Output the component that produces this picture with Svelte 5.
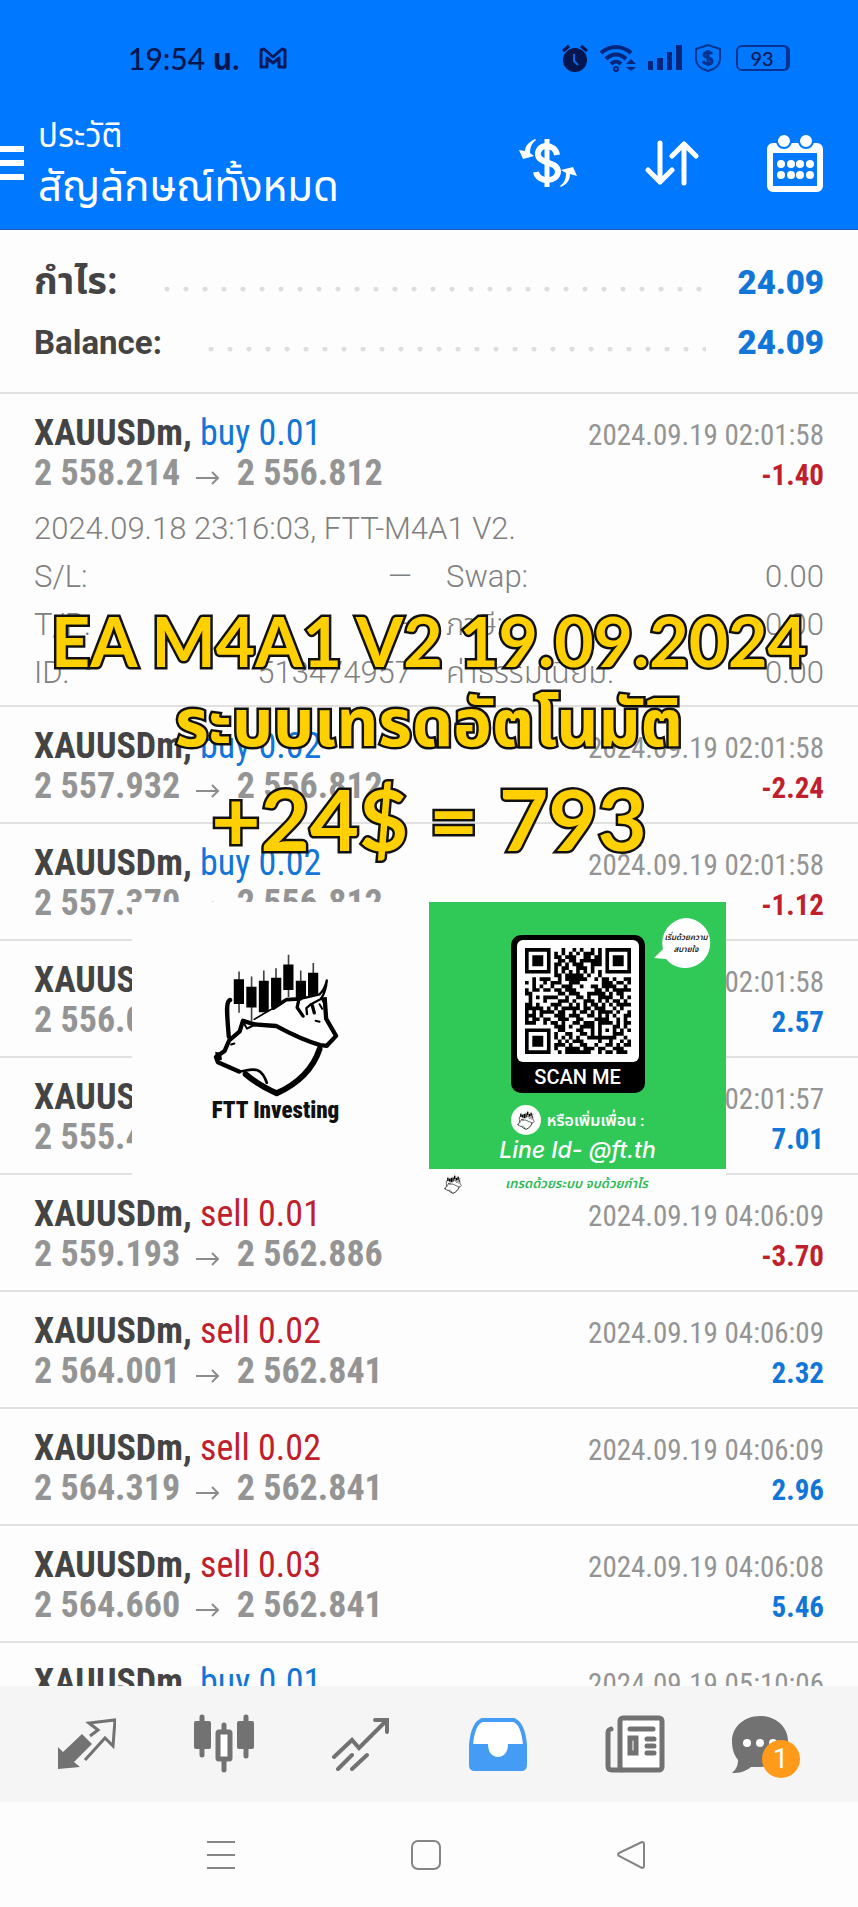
<script>
    const deals = [
        { side: 'buy', volume: '0.02', open: '2 557.932', close: '2 556.812', time: '2024.09.19 02:01:58', profit: '-2.24' },
        { side: 'buy', volume: '0.02', open: '2 557.370', close: '2 556.812', time: '2024.09.19 02:01:58', profit: '-1.12' },
        { side: 'buy', volume: '0.03', open: '2 556.014', close: '2 556.871', time: '2024.09.19 02:01:58', profit: '2.57' },
        { side: 'buy', volume: '0.05', open: '2 555.410', close: '2 556.812', time: '2024.09.19 02:01:57', profit: '7.01' },
        { side: 'sell', volume: '0.01', open: '2 559.193', close: '2 562.886', time: '2024.09.19 04:06:09', profit: '-3.70' },
        { side: 'sell', volume: '0.02', open: '2 564.001', close: '2 562.841', time: '2024.09.19 04:06:09', profit: '2.32' },
        { side: 'sell', volume: '0.02', open: '2 564.319', close: '2 562.841', time: '2024.09.19 04:06:09', profit: '2.96' },
        { side: 'sell', volume: '0.03', open: '2 564.660', close: '2 562.841', time: '2024.09.19 04:06:08', profit: '5.46' },
        { side: 'buy', volume: '0.01', open: '2 559.020', close: '2 561.114', time: '2024.09.19 05:10:06', profit: '2.09' },
    ]

    const first = {
        side: 'buy', volume: '0.01', open: '2 558.214', close: '2 556.812', time: '2024.09.19 02:01:58', profit: '-1.40',
        details: [
            ['S/L:', '—', 'Swap:', '0.00'],
            ['T/P:', '—', 'ภาษี:', '0.00'],
            ['ID:', '513474957', 'ค่าธรรมเนียม:', '0.00'],
        ]
    }

    const qr = [
        '11111110001001010010101111111',
        '10000010101010101110101000001',
        '10111010110111001101101011101',
        '10111010011011011111101011101',
        '10111010110101110011101011101',
        '10000010101100111010001000001',
        '11111110101010101010101111111',
        '00000000110111110100100000000',
        '00101110010111111001011010011',
        '10100101110011100000011101101',
        '00101001001110010011011110010',
        '10110110110111000001101011111',
        '11000000011011100111110101100',
        '01010111100100110100111100101',
        '01000100011101001110101011010',
        '11010001110010101011010101111',
        '11111010101111101101110010100',
        '10101111011001011010111101001',
        '11101000111011100110101010011',
        '10110110011100110001111001010',
        '11100101101001101110111101011',
        '00000000111010011110100011010',
        '11111110011000110010101010101',
        '10000010100110011010100011100',
        '10111010101010100111111110010',
        '10111010010101110000100100101',
        '10111010111010011001001101011',
        '10000010100111101110110011100',
        '11111110010111111100101101110',
    ]

    let qr_path = ''
    qr.forEach((row, y) => {
        for (let x = 0; x < row.length; x++) {
            if (row[x] == '1') qr_path += `M${x} ${y}h1v1h-1z`
        }
    })
</script>

{#snippet logo()}
    <svg class="logo" viewBox="270 185 400 440" aria-hidden="true">
        <g stroke="#444" stroke-width="5">
            <path d="M358 243v125M396 258v135M433 240v120M470 233v100M508 192v128M545 240v80M583 217v80" />
        </g>
        <path d="M342 266h31v75h-31zM380 289h31v63h-31zM418 271h30v95h-30zM455 262h31v90h-31zM492 222h31v77h-31zM530 271h31v55h-31zM567 247h31v70h-31z" />
        <g fill="none" stroke="#000" stroke-linejoin="round" stroke-linecap="round">
            <path fill="#fff" stroke="none" d="M404 392l60-38 42-28 38-2 56-14 24-40-8 56 8 62 34 52-30 32-30-2-130-46z" />
            <path stroke-width="13" d="M331 329c-14 4-10 40-4 112" />
            <path stroke-width="5" d="M404 388l40-24 22-12" />
            <path stroke-width="11" d="M462 354l40-26 42-2" />
            <path stroke-width="7" d="M544 326l58-14c12-12 18-24 22-42-2 24-8 42-18 56l-30 16-14 12 2 18" />
            <path stroke-width="13" d="M618 330l4 56 30 52-28 30-20-2c-50-14-90-34-134-58l-66-5" />
            <path stroke-width="10" d="M538 334l-4 18 18 26M580 346l6 22" />
            <path stroke-width="13" d="M404 403l-34-11-10 32-32 28-14 32-26 18 6 16 64 28" />
            <path stroke-width="8" d="M358 546c22-2 36-10 56-4 12 5 22 20 28 38" />
            <path stroke-width="18" d="M378 554c28 24 58 42 94 58 66-30 110-74 130-134" />
            <path stroke-width="6" d="M372 398l10 18 16-8M590 392l12 3M602 342l8 14M334 464l10-3" />
        </g>
        <path d="M286 486l18 4 2 20-18 6zM604 322l20-2v40l-12-22z" />
    </svg>
{/snippet}

{#snippet deal_head(deal)}
    <div class="line">
        <span class="symbol">XAUUSDm, <span class={deal.side}>{deal.side} {deal.volume}</span></span>
        <time>{deal.time}</time>
    </div>
    <div class="line">
        <span class="price">
            {deal.open}
            <svg class="arrow" viewBox="0 0 24 14" aria-hidden="true"><path d="M0 7h22M16 1l6 6-6 6" /></svg>
            {deal.close}
        </span>
        <span class="profit" class:loss={deal.profit[0] == '-'}>{deal.profit}</span>
    </div>
{/snippet}

<div class="app">
    <header>
        <div class="status">
            <span class="clock">19:54 <b>น.</b></span>
            <svg width="28" height="22" viewBox="0 0 28 22" aria-hidden="true">
                <path d="M2 20V3l3-1 9 8 9-8 3 1v17h-6V11l-6 5-6-5v9z" fill="none" stroke="#061a5c" stroke-width="3" stroke-linejoin="round" />
            </svg>
            <svg class="alarm" width="26" height="28" viewBox="0 0 26 28" aria-hidden="true">
                <circle cx="13" cy="16" r="12" fill="#04164f" />
                <path d="M1 7l6-5M25 7l-6-5" stroke="#04164f" stroke-width="3" />
                <path d="M12 10v7l4 4" stroke="#0a6be0" stroke-width="2" fill="none" />
            </svg>
            <svg width="36" height="28" viewBox="0 0 36 28" fill="none" stroke="#04257c" stroke-width="4" aria-hidden="true">
                <path d="M1 9c9-8 21-8 30 0M6 15c6-6 14-6 20 0M11 20c3-3 7-3 10 0" />
                <circle cx="16" cy="25" r="1" />
                <path d="M26 20l5-5 5 5zM26 23l5 4 5-4z" fill="#04257c" stroke="none" />
            </svg>
            <svg width="34" height="26" viewBox="0 0 34 26" fill="#04257c" aria-hidden="true">
                <path d="M0 16h5v9H0zM9 13h6v12H9zM19 7h5v18h-5zM28 0h6v25h-6z" />
            </svg>
            <svg class="shield" width="28" height="30" viewBox="0 0 28 30" fill="none" stroke="#043490" stroke-width="2" aria-hidden="true">
                <path d="M14 2l12 4v10c0 6-5 10-12 12C7 26 2 22 2 16V6z" />
                <path stroke-width="3" d="M18 11c-2-3-8-2-8 1s8 2 8 6-7 4-9 0M14 7v16" />
            </svg>
            <span class="battery">93</span>
        </div>
        <div class="toolbar">
            <button class="menu" aria-label="Menu"><span></span><span></span><span></span></button>
            <div class="heading">
                <div class="section">ประวัติ</div>
                <h1>สัญลักษณ์ทั้งหมด</h1>
            </div>
            <button aria-label="Currency">
                <svg width="58" height="50" viewBox="0 0 58 50" fill="none" stroke="#fff" aria-hidden="true">
                    <path stroke-width="6" d="M38 17c-2-12-20-12-19 0 1 9 19 6 20 16 0 12-20 12-22 1" />
                    <path stroke-width="5" d="M28 1v48" />
                    <path fill="#fff" stroke="none" d="M16 1C10 4 6 8 6 13L0 12l4 9 11-3-4-3C11 9 13 5 17 2zM42 49c6-3 9-7 9-13l7 2-4-9-12 3 5 3c0 6-2 10-6 13z" />
                </svg>
            </button>
            <button aria-label="Sort">
                <svg width="54" height="46" viewBox="0 0 54 46" fill="none" stroke="#fff" stroke-width="5" stroke-linecap="round" stroke-linejoin="round" aria-hidden="true">
                    <path d="M15 3v39M3 30l12 12 12-12M39 43V4M27 16L39 4l12 12" />
                </svg>
            </button>
            <button aria-label="Period">
                <svg width="56" height="58" viewBox="0 0 56 58" aria-hidden="true">
                    <rect x="3" y="12" width="50" height="43" rx="3" fill="none" stroke="#fff" stroke-width="6" />
                    <path d="M3 10h50v9H3z" fill="#fff" />
                    <circle cx="17" cy="7" r="7" fill="#fff" stroke="#0078ff" stroke-width="2" />
                    <circle cx="39" cy="7" r="7" fill="#fff" stroke="#0078ff" stroke-width="2" />
                    {#each [14, 24, 33, 43] as cx}
                        <circle {cx} cy="30" r="4" fill="#fff" />
                        <circle {cx} cy="41" r="4" fill="#fff" />
                    {/each}
                </svg>
            </button>
        </div>
    </header>

    <main>
        <section class="summary">
            <div class="total"><span class="thai-label">กำไร:</span><i class="dots"></i><b>24.09</b></div>
            <div class="total"><span>Balance:</span><i class="dots"></i><b>24.09</b></div>
        </section>

        <article class="deal">
            {@render deal_head(first)}
            <div class="details">
                <p>2024.09.18 23:16:03, FTT-M4A1 V2.</p>
                {#each first.details as [l1, v1, l2, v2]}
                    <div class="pair"><span>{l1}</span><span>{v1}</span></div>
                    <div class="pair"><span>{l2}</span><span>{v2}</span></div>
                {/each}
            </div>
        </article>

        {#each deals as deal}
            <article class="deal">
                {@render deal_head(deal)}
            </article>
        {/each}
    </main>

    <nav class="tabs">
        <a href="#quotes" aria-label="Quotes">
            <svg width="58" height="52" viewBox="0 0 58 52" aria-hidden="true">
                <path d="M0 51V29l5 5 19-18 10 10-18 18 6 5z" fill="#727272" />
                <path d="M32 18l8-6-9-7 26-3-2 26-8-8-20 22" fill="none" stroke="#727272" stroke-width="3" />
            </svg>
        </a>
        <a href="#charts" aria-label="Charts">
            <svg width="60" height="60" viewBox="0 0 60 60" fill="#727272" aria-hidden="true">
                <rect x="0" y="7" width="17" height="28" rx="2" />
                <rect x="43" y="7" width="17" height="28" rx="2" />
                <rect x="24" y="18" width="12" height="27" rx="1" fill="#fff" stroke="#727272" stroke-width="5" />
                <path d="M8 3v38M52 3v39M30 11v6M30 46v10" stroke="#727272" stroke-width="5" stroke-linecap="round" />
            </svg>
        </a>
        <a href="#trade" aria-label="Trade">
            <svg width="58" height="54" viewBox="0 0 58 54" fill="none" stroke="#727272" stroke-width="4" stroke-linecap="round" aria-hidden="true">
                <path d="M2 40l18-17 7 8L54 4M43 3h12v12M6 52l14-14M20 52l15-14" />
            </svg>
        </a>
        <a href="#history" aria-label="History" aria-current="page">
            <svg width="58" height="54" viewBox="0 0 58 54" aria-hidden="true">
                <path d="M13 3h32c7 3 10 13 11 25v20c0 3-1 4-4 4H6c-3 0-4-1-4-4V28C3 16 6 6 13 3z" fill="#fff" stroke="#459cf5" stroke-width="4" />
                <path d="M1 27h18c0 8 4 13 10 13s10-5 10-13h18v21c0 4-1 5-5 5H6c-4 0-5-1-5-5z" fill="#459cf5" />
            </svg>
        </a>
        <a href="#news" aria-label="News">
            <svg width="60" height="58" viewBox="0 0 60 58" fill="none" stroke="#727272" stroke-width="5" stroke-linecap="round" aria-hidden="true">
                <rect x="15" y="3" width="42" height="52" rx="3" fill="#fff" />
                <path d="M6 14c-3 1-3 2-3 5v32c0 3 1 4 4 4h10M25 14h23M42 24h7M42 31h7M42 38h7M25 23h6v15h-6z" />
            </svg>
        </a>
        <a href="#messages" aria-label="Messages" class="messages">
            <svg width="58" height="58" viewBox="0 0 58 58" fill="#727272" aria-hidden="true">
                <path d="M29 1c16 0 28 11 28 25S46 52 30 52l-10 0C14 57 8 58 1 58c4-4 6-7 6-13C3 40 1 34 1 26 1 12 13 1 29 1z" />
                <g fill="#fff"><circle cx="16" cy="28" r="4" /><circle cx="29" cy="28" r="4" /><circle cx="42" cy="28" r="4" /></g>
            </svg>
            <span class="badge">1</span>
        </a>
    </nav>

    <div class="system">
        <button aria-label="Recent apps">
            <svg width="30" height="30" viewBox="0 0 30 30" aria-hidden="true"><path d="M1 2h28M1 15h28M1 28h28" /></svg>
        </button>
        <button aria-label="Home">
            <svg width="30" height="30" viewBox="0 0 30 30" aria-hidden="true"><rect x="1" y="1" width="28" height="28" rx="6" /></svg>
        </button>
        <button aria-label="Back">
            <svg width="30" height="30" viewBox="0 0 30 30" aria-hidden="true"><path d="M26 2L3 13q-2 1 0 3l23 12q2 0 2-2V4q0-2-2-2z" /></svg>
        </button>
    </div>

    <div class="promo">
        <p class="name">EA M4A1 V2 19.09.2024</p>
        <p class="thai">ระบบเทรดอัตโนมัติ</p>
        <p class="gain">+24$ = 793</p>
        <div class="cards">
            <div class="brand">
                {@render logo()}
                <span>FTT Investing</span>
            </div>
            <div class="line-card">
                <div class="green">
                    <div class="scan">
                        <svg class="qr" viewBox="0 0 29 29" role="img" aria-label="QR"><path d={qr_path} /></svg>
                        <span>SCAN ME</span>
                    </div>
                    <div class="bubble">
                        <svg width="58" height="52" viewBox="0 0 58 52" aria-hidden="true"><path fill="#fff" d="M32 0a25 25 0 1 1-20 41L0 40l9-9A25 25 0 0 1 32 0z" /></svg>
                        <span>เริ่มด้วยความ<br>สบายใจ</span>
                    </div>
                    <div class="friend"><i>{@render logo()}</i>หรือเพิ่มเพื่อน :</div>
                    <div class="line-id">Line Id- @ft.th</div>
                </div>
                <div class="motto">
                    {@render logo()}
                    <span>เทรดด้วยระบบ จบด้วยกำไร</span>
                </div>
            </div>
        </div>
    </div>
</div>

<style>
    :global(body) {
        margin: 0;
    }

    .app {
        position: relative;
        height: 100vh;
        display: flex;
        flex-direction: column;
        overflow: hidden;
        background: #fdfdfd;
        font-family: Roboto, "Noto Sans Thai", "Noto Sans", sans-serif;
        color: #444;
    }

    p, h1 {
        margin: 0;
        font-weight: 400;
    }

    svg {
        display: block;
        flex: none;
    }

    button {
        padding: 0;
        border: 0;
        background: none;
        cursor: pointer;
    }

    header {
        flex: none;
        height: 230px;
        box-sizing: border-box;
        padding-top: 40px;
        background: #0078ff;
        border-bottom: 1px solid #1f5bb5;
    }

    .status {
        display: flex;
        align-items: center;
        height: 36px;
        padding: 0 68px 0 128px;
        color: #04164f;
    }

    .clock {
        margin-right: 20px;
        font: 500 30px/36px Lato, "Noto Sans Thai", sans-serif;
    }

    .alarm {
        margin-left: auto;
    }

    .status svg + svg {
        margin-right: 12px;
    }

    .battery {
        width: 48px;
        height: 22px;
        margin-left: 2px;
        border: 2px solid #043490;
        border-right-width: 4px;
        border-radius: 6px;
        font: 500 20px/22px Lato, sans-serif;
        text-align: center;
    }

    .toolbar {
        display: flex;
        align-items: center;
        gap: 68px;
        height: 124px;
        margin-top: 25px;
        padding-right: 35px;
        color: #fff;
    }

    .menu {
        display: grid;
        gap: 8px;
        width: 24px;
        margin-right: -54px;
    }

    .menu span {
        height: 6px;
        background: #fff;
    }

    .heading {
        flex: 1;
    }

    .section {
        font-size: 33px;
        line-height: 48px;
    }

    h1 {
        font-size: 42px;
        line-height: 54px;
        white-space: nowrap;
    }

    main {
        flex: 1;
        min-height: 0;
        overflow: hidden;
    }

    .summary {
        padding: 22px 34px 20px;
        border-bottom: 2px solid #e0e0e0;
    }

    .total {
        display: flex;
        align-items: center;
        height: 60px;
        font-size: 33px;
        font-weight: 700;
    }

    .total .thai-label {
        font-size: 38px;
    }

    .dots {
        flex: 1;
        height: 5px;
        margin: 14px 32px 0 46px;
        background: radial-gradient(circle at 3px 2px, #ddd 2px, transparent 3px) 0 0 / 19px 5px repeat-x;
    }

    .total b {
        color: #1275d8;
    }

    .deal {
        padding: 19px 34px 16px;
        border-bottom: 2px solid #e0e0e0;
        font-family: "Roboto Condensed", "Liberation Sans Narrow", Roboto, sans-serif;
    }

    .line {
        display: flex;
        align-items: baseline;
        justify-content: space-between;
        height: 40px;
        line-height: 40px;
        white-space: nowrap;
    }

    .symbol, .price {
        font-size: 36px;
        font-weight: 700;
    }

    .symbol span {
        font-weight: 400;
    }

    .buy {
        color: #1275d8;
    }

    .sell {
        color: #c0202c;
    }

    .price {
        color: #949494;
    }

    .arrow {
        display: inline-block;
        width: 24px;
        height: 14px;
        margin: 0 8px;
        fill: none;
        stroke: #8c8c8c;
        stroke-width: 2;
    }

    time {
        font-size: 29px;
        color: #949494;
    }

    .profit {
        font-size: 29px;
        font-weight: 700;
        color: #1275d8;
    }

    .profit.loss {
        color: #c0202c;
    }

    .details {
        display: grid;
        grid-template-columns: 1fr 1fr;
        column-gap: 34px;
        padding-top: 12px;
        margin-bottom: -8px;
        font: 300 31px/48px Roboto, "Noto Sans Thai", sans-serif;
        color: #808080;
    }

    .details p {
        grid-column: 1 / 3;
        font-weight: 300;
    }

    .pair {
        display: flex;
        justify-content: space-between;
    }

    .tabs {
        flex: none;
        display: grid;
        grid-template-columns: repeat(6, 1fr);
        height: 116px;
        padding: 0 18px;
        background: #f5f5f5;
    }

    .tabs a {
        display: flex;
        align-items: center;
        justify-content: center;
    }

    .tabs .messages {
        position: relative;
        padding-right: 24px;
    }

    .badge {
        position: absolute;
        left: calc(50% - 10px);
        top: 54px;
        width: 38px;
        border-radius: 50%;
        background: #ff9a1a;
        color: #fff;
        font-size: 28px;
        line-height: 38px;
        text-align: center;
    }

    .system {
        flex: none;
        display: grid;
        grid-template-columns: repeat(3, 1fr);
        height: 105px;
        padding: 0 125px 0 119px;
    }

    .system button {
        display: flex;
        align-items: center;
        justify-content: center;
    }

    .system svg {
        fill: none;
        stroke: #858585;
        stroke-width: 2;
    }

    .promo {
        position: absolute;
        top: 596px;
        left: 0;
        right: 0;
        display: flex;
        flex-direction: column;
        align-items: center;
        font-family: Lato, "Noto Sans Thai", sans-serif;
        pointer-events: none;
    }

    .promo p {
        color: #ffd000;
        font-weight: 700;
        white-space: nowrap;
        -webkit-text-stroke: 5px #111;
        paint-order: stroke fill;
    }

    .promo .name {
        font-size: 68px;
        line-height: 90px;
    }

    .promo .thai {
        font-size: 65px;
        line-height: 70px;
    }

    .promo .gain {
        font-size: 85px;
        line-height: 124px;
    }

    .cards {
        display: grid;
        grid-template-columns: 297px 297px;
        height: 296px;
        margin-top: 22px;
    }

    .brand {
        display: flex;
        flex-direction: column;
        align-items: center;
        padding-top: 50px;
        padding-right: 10px;
        background: #fdfdfd;
    }

    .logo {
        width: 132px;
        height: 146px;
    }

    .brand span {
        font: 900 23px/26px "Roboto Condensed", Roboto, sans-serif;
        color: #111;
    }

    .line-card {
        background: #fdfdfd;
    }

    .green {
        position: relative;
        display: flex;
        flex-direction: column;
        align-items: center;
        height: 267px;
        box-sizing: border-box;
        padding-top: 33px;
        background: #30c957;
        color: #fff;
    }

    .scan {
        display: flex;
        flex-direction: column;
        align-items: center;
        width: 134px;
        height: 158px;
        box-sizing: border-box;
        padding-top: 5px;
        border-radius: 10px;
        background: #000;
        font: 500 20px/30px Roboto, sans-serif;
    }

    .qr {
        width: 106px;
        height: 106px;
        padding: 8px;
        border-radius: 6px;
        background: #fff;
    }

    .bubble {
        position: absolute;
        top: 16px;
        right: 14px;
    }

    .bubble span {
        position: absolute;
        top: 14px;
        left: 8px;
        width: 48px;
        color: #222;
        font: italic 600 8px/12px "Noto Sans Thai", sans-serif;
        text-align: center;
        white-space: nowrap;
    }

    .friend {
        display: flex;
        align-items: center;
        gap: 6px;
        margin-top: 12px;
        font-size: 16px;
        font-weight: 600;
        line-height: 30px;
    }

    .friend i {
        display: grid;
        place-items: center;
        width: 30px;
        height: 30px;
        border-radius: 50%;
        background: #fff;
    }

    .friend .logo, .motto .logo {
        width: 20px;
        height: 20px;
    }

    .line-id {
        font: italic 500 23px/30px Inter, sans-serif;
    }

    .motto {
        display: flex;
        align-items: center;
        gap: 42px;
        height: 29px;
        padding-left: 14px;
        color: #30b957;
        font: italic 600 13px/28px "Noto Sans Thai", sans-serif;
        white-space: nowrap;
    }
</style>
